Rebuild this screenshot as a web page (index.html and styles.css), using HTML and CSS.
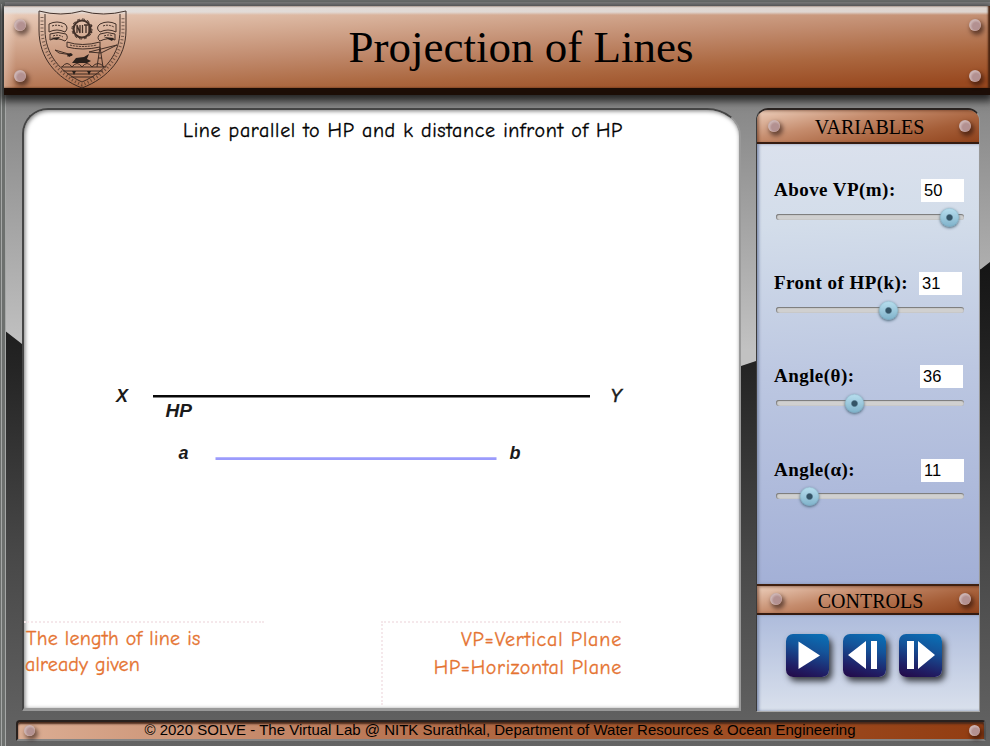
FILE: index.html
```html
<!DOCTYPE html>
<html lang="en">
<head>
<meta charset="utf-8">
<title>Projection of Lines</title>
<link rel="stylesheet" href="styles.css">
</head>
<body>
<svg class="backdrop" width="990" height="746" viewBox="0 0 990 746" aria-hidden="true">
  <defs>
    <linearGradient id="light" x1="0" y1="95" x2="0" y2="350" gradientUnits="userSpaceOnUse"><stop offset="0" stop-color="#858585"/><stop offset="1" stop-color="#c2c2c2"/></linearGradient>
    <linearGradient id="dark" x1="0" y1="270" x2="0" y2="746" gradientUnits="userSpaceOnUse"><stop offset="0" stop-color="#161616"/><stop offset=".2" stop-color="#242424"/><stop offset=".6" stop-color="#484848"/><stop offset="1" stop-color="#646464"/></linearGradient>
  </defs>
  <path fill="url(#light)" d="M0 0H990V746H0z"/>
  <path fill="url(#dark)" d="M4 330L22 344L741 366L756 361L981 269L990 262V746H4z"/>
  <path fill="#6d706e" d="M0 0H990V2H0zM0 0H5V746H0z"/>
  <path fill="#878788" d="M5 2H990V6H5z"/>
  <path fill="#a5a7a6" d="M1 4H2V746H1zM5 95H6V746H5z"/>
</svg>
<div class="app">
  <header class="banner">
    <div class="rivets"><i class="rivet"></i><i class="rivet"></i></div>
    <svg class="crest" width="90" height="80" viewBox="0 0 90 80" fill="none" stroke="#33231d" stroke-width="1">
      <path d="M1 1Q23 7 44 1Q65 7 88 1V20C88 48 70 68 44 78C18 68 1 48 1 20z"/>
      <path d="M7 4V20C7 44 22 62 44 72C67 62 82 44 82 20V4"/>
      <path stroke-width="3" stroke-dasharray="1 2.5" opacity=".65" d="M4 7V21C5 46 23 66 44 75C66 66 84 46 85 21V7"/>
      <circle cx="44" cy="19" r="8.5" stroke-width="2.2"/><circle cx="44" cy="19" r="10" stroke-dasharray="3 2.2"/>
      <path stroke-width="1.3" d="M39 23V15L42 23V15M44.500 15V23M46 15H50M48 15V23M51 15V23M54 15L51 19L54 23"/>
      <path d="M11 14Q19 10 27 14Q31 18 27 22Q19 18 11 22zM62 14Q70 10 78 14V22Q70 18 62 22Q57 18 62 14zM12 24Q20 21 28 24Q31 28 27 31Q19 27 12 30zM77 24Q69 21 62 24Q58 28 62 31Q70 27 77 30zM29 32Q44 37 62 32V37Q44 41 29 37z"/>
      <path stroke-dasharray="2 1" d="M14 16Q20 14 25 17M65 16Q70 14 76 17M15 26Q20 24 25 27M66 26Q71 24 75 26M32 35Q44 38 59 35"/>
      <path d="M17 40L34 45L21 43zM34 45L29 46M51 42L79 35L63 43zM59 57L62 37L65 57M60 48H64M24 57Q29 50 34 57Q39 50 44 57Q49 50 54 57Q60 50 66 57M23 57H68M25 61H65M29 64H61M33 67H56"/>
      <path fill="#1a1412" stroke="none" d="M34 53L38 48L46 47L51 44L49 49L53 51L49 53zM29 44L33 43L35 45L31 47zM12 28L22 27L19 30zM66 27L76 28L74 31zM34 61H38L36 65zM49 61H53L51 65z"/>
    </svg>
    <h1>Projection of Lines</h1>
    <div class="rivets"><i class="rivet"></i><i class="rivet"></i></div>
  </header>
  <div class="workspace">
    <main class="canvas">
      <p class="caption">Line parallel to HP and k distance infront of HP</p>
      <svg class="diagram" width="715" height="460" viewBox="24 150 715 460">
        <path class="plane" d="M153 396.3H590"/>
        <path class="segment" d="M215.500 458.6H496.500"/>
        <text x="116" y="402">X</text><text class="y" x="610" y="402">Y</text>
        <text x="165.500" y="417" textLength="26.500" lengthAdjust="spacingAndGlyphs">HP</text>
        <text x="178.500" y="459">a</text><text x="509.500" y="459">b</text>
      </svg>
      <div class="notes">
        <p class="note"><span>The length of line is</span><span class="second">already given</span></p>
        <p class="legend"><span class="vp">VP=Vertical Plane</span><span class="hp">HP=Horizontal Plane</span></p>
      </div>
    </main>
    <aside class="side">
      <h2 class="bar first"><i class="rivet"></i><span>VARIABLES</span><i class="rivet"></i></h2>
      <div class="variables">
        <div class="variable"><div class="row"><label>Above VP(m):</label><output>50</output></div><div class="track"><i class="thumb" style="left:164px"></i></div></div>
        <div class="variable"><div class="row k"><label>Front of HP(k):</label><output>31</output></div><div class="track"><i class="thumb" style="left:103px"></i></div></div>
        <div class="variable"><div class="row theta"><label>Angle(θ):</label><output>36</output></div><div class="track"><i class="thumb" style="left:69px"></i></div></div>
        <div class="variable"><div class="row alpha"><label>Angle(α):</label><output>11</output></div><div class="track"><i class="thumb" style="left:24px"></i></div></div>
      </div>
      <h2 class="bar"><i class="rivet"></i><span>CONTROLS</span><i class="rivet"></i></h2>
      <div class="controls">
        <button aria-label="Play"><svg width="43" height="43"><path d="M12.500 7.500V35L34 21.500z"/></svg></button>
        <button aria-label="Previous"><svg width="43" height="43"><path d="M23 7V35L5 21zM28 7H34V35H28z"/></svg></button>
        <button aria-label="Next"><svg width="43" height="43"><path d="M8 7H15V35H8zM19 7V35L36 21z"/></svg></button>
      </div>
    </aside>
  </div>
  <footer><i class="rivet"></i><span>© 2020 SOLVE - The Virtual Lab @ NITK Surathkal, Department of Water Resources &amp; Ocean Engineering</span><i class="rivet"></i></footer>
</div>
</body>
</html>
```
FILE: styles.css
```css
* { box-sizing: border-box; }
body { margin: 0; width: 990px; height: 746px; overflow: hidden; background: #666; }
h1, h2, p { margin: 0; font-weight: 400; }
.backdrop { position: absolute; z-index: -1; inset: 0; }
.app { width: 990px; height: 746px; padding: 6px 0 0 4px; display: flex; flex-direction: column; }

.rivet { display: block; flex: none; width: 12px; height: 12px; border-radius: 50%; background: radial-gradient(circle at 60% 60%, #b39191 0 35%, #ceb6b5 62%, #b39b9b 85%); box-shadow: 2px 3px 4px 1px rgba(30, 10, 5, .55); }
.banner { height: 89px; flex: none; display: flex; padding: 0 9px 0 10px; border-bottom: 7px solid #1c0d06; background: linear-gradient(to bottom, rgba(226,224,223,.85) 0 6px, transparent 9px), linear-gradient(to right, rgba(255,240,230,.35), transparent 12px), linear-gradient(177deg, #edd3c3 0%, #ddb9a3 18%, #c18b6e 48%, #ab673f 72%, #98481f 95%); box-shadow: 0 3px 8px 3px #252525, inset -2px 0 2px #48230f; }
.rivets { padding: 13px 0 6px; display: flex; flex-direction: column; justify-content: space-between; }
.crest { margin: 4px 0 0 12px; flex: none; opacity: .9; }
.banner h1 { flex: 1; padding: 15px 0 0 3px; margin-right: 58px; text-align: center; font: 45px/52px "Liberation Serif", "Times New Roman", serif; white-space: nowrap; }

.workspace { height: 604px; flex: none; margin: 13px 10px 0 18px; display: flex; justify-content: space-between; align-items: stretch; }
.canvas { width: 719px; height: 603px; border: 2px solid #454545; border-right-color: #999; border-bottom: 3px solid #999; border-radius: 26px 34px 0 0 / 26px 28px 0 0; background: #fff; box-shadow: inset 1px 1px 4px #777; display: flex; flex-direction: column; }
.caption, .note, .legend { font-family: "Comic Sans MS", "Comic Neue", "Open Sans", sans-serif; -webkit-text-stroke: .3px currentColor; }
.caption { height: 40px; padding: 8px 0 0 159px; font-size: 20px; line-height: 26px; letter-spacing: .66px; color: #000; white-space: nowrap; }
.diagram { display: block; flex: none; }
.diagram text { font: italic bold 18px "Liberation Sans", Arial, sans-serif; fill: #1a1a1a; }
.diagram .y { font-weight: 400; stroke: #1a1a1a; stroke-width: .5px; }
.plane { stroke: #080808; stroke-width: 2.5; }
.segment { stroke: #9b9bfc; stroke-width: 2.6; }
.notes { display: flex; justify-content: space-between; margin-top: 11px; padding-right: 118px; }
.note, .legend { width: 240px; height: 84px; border-top: 2px dotted #f5e8eb; color: #e57331; font-size: 20px; white-space: nowrap; }
.note { padding: 3px 0 0 2px; line-height: 26px; letter-spacing: .25px; }
.legend { border-left: 2px dotted #f5e8eb; padding-top: 3px; line-height: 28px; text-align: right; }
.note span, .legend span { display: block; }
.legend span { margin-right: -1px; }
.second { margin-left: -1px; letter-spacing: .15px; }
.vp { letter-spacing: .83px; }
.hp { letter-spacing: .65px; }

.side { width: 224px; border: 1px solid #3b3b3b; border-top: 2px solid #292321; border-right: 1px solid #999; border-bottom: 1px solid #aaa; border-radius: 12px 12px 0 0; overflow: hidden; display: flex; flex-direction: column; }
.bar { height: 31px; flex: none; display: flex; align-items: center; justify-content: space-between; padding: 0 8px 1px 13px; border-top: 2px solid #40200f; border-bottom: 2px solid #351b10; background: linear-gradient(168deg, #edcfbc, #c58c6d 37%, #a55e38 72%, #90431c); box-shadow: inset 2px 1px 3px rgba(75,30,10,.5); font: 20px/27px "Liberation Serif", "Times New Roman", serif; }
.bar.first { height: 34px; border-top-width: 0; padding-left: 11px; }
.bar span { padding-top: 5px; }
.bar.first span { padding-top: 4px; }
.variables { height: 440px; flex: none; padding: 35px 14px 0 17px; background: linear-gradient(177deg, #dbe1ed, #d3ddea 18%, #bcc7e1 52%, #a2afd6); box-shadow: inset 2px 0 3px #8390af; }
.variable { height: 93.2px; }
.row { height: 25px; display: flex; justify-content: space-between; padding-right: 1px; }
.row.k { padding-right: 3px; }
.row.theta { padding-right: 2px; }
.row.alpha { padding-right: 1px; }
.row label { font: bold 19px/22px "Liberation Serif", "Times New Roman", serif; letter-spacing: .45px; white-space: nowrap; }
.row output { width: 43px; height: 23px; padding-left: 3px; background: #fff; font: 16.500px/23px "Liberation Sans", Arial, sans-serif; }
.track { position: relative; width: 188px; height: 6px; margin: 9.500px 0 0 2px; border-radius: 3px; background: #d0d0d0; box-shadow: inset 0 1px 1px #777, inset 1px 0 1px #888; }
.thumb { position: absolute; top: -6px; width: 19px; height: 19px; border-radius: 50%; background: radial-gradient(circle, #345466 0 2.5px, transparent 3.8px), linear-gradient(#b9dfef, #7fb2ca); box-shadow: 0 1px 3px #456477, inset 0 0 1px #447083; }
.controls { flex: 1; display: flex; gap: 13.5px; padding: 19px 0 0 29px; background: linear-gradient(#aebcdc, #d9e0ec); box-shadow: inset 2px 0 3px #8390af; }
.controls button { width: 43px; height: 43px; padding: 0; border: 0; border-radius: 7px; background: linear-gradient(195deg, #0873b9, #14549a 35%, #201f66 75%, #240845); box-shadow: 3px 4px 6px #35383f; }
.controls svg { display: block; fill: #fff; }

footer { height: 21px; flex: none; margin: 8px 4px 0 12px; display: flex; align-items: center; justify-content: space-between; padding: 0 4px 0 6px; border: 2px solid #29211e; border-right-color: #555; border-bottom-color: #858585; border-radius: 4px 4px 1px 1px; background: linear-gradient(to right, #dcae94, #bd7c5b 34%, #a35328 65%, #923d12); box-shadow: inset 0 2px 2px #48291b; font: 15px/17px "Liberation Sans", Arial, sans-serif; white-space: nowrap; }
footer span { padding: 0 4px 2px 0; }
footer .rivet { width: 11px; height: 11px; }
```
